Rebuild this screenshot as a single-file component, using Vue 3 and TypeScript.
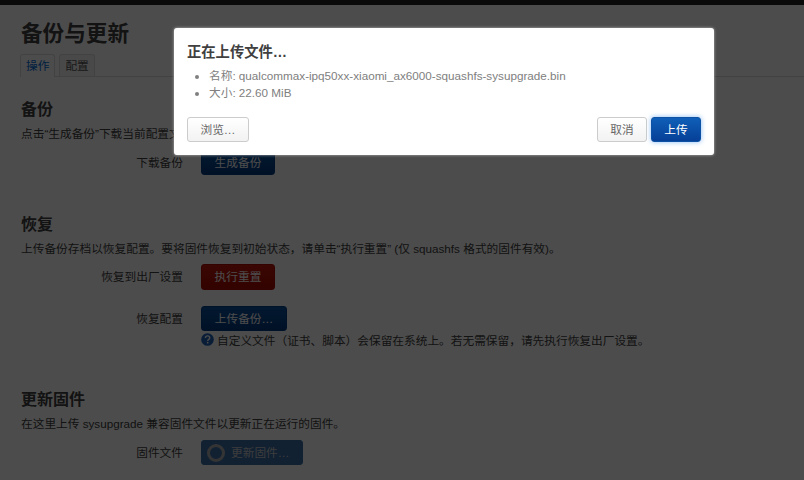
<script setup lang="ts">
const fileInfo = [
  { label: '名称', value: 'qualcommax-ipq50xx-xiaomi_ax6000-squashfs-sysupgrade.bin' },
  { label: '大小', value: '22.60 MiB' },
]
</script>

<template>
  <div class="page">
    <div class="topbar"></div>
    <main class="main">
      <h2 class="title">备份与更新</h2>
      <ul class="tabs">
        <li class="tab active">操作</li>
        <li class="tab">配置</li>
      </ul>

      <section class="sec sec-backup">
        <h3>备份</h3>
        <p>点击“生成备份”下载当前配置文件</p>
        <div class="row first">
          <label>下载备份</label>
          <button class="btn save w74">生成备份</button>
        </div>
      </section>

      <section class="sec sec-restore">
        <h3>恢复</h3>
        <p>上传备份存档以恢复配置。要将固件恢复到初始状态，请单击“执行重置” (仅 squashfs 格式的固件有效)。</p>
        <div class="row first tight">
          <label>恢复到出厂设置</label>
          <button class="btn reset w74">执行重置</button>
        </div>
        <div class="row second">
          <label>恢复配置</label>
          <div class="field">
            <button class="btn save w86">上传备份…</button>
            <div class="hint">
              <svg class="help" viewBox="0 0 14 14" width="13" height="13" aria-hidden="true">
                <circle cx="7" cy="7" r="6.8" fill="#1f62b8" />
                <path d="M4.7 5.4C4.8 4 5.8 3.1 7.1 3.1c1.4 0 2.3.9 2.3 2 0 1-.6 1.4-1.2 1.9-.6.4-1 .8-1 1.6" fill="none" stroke="#fff" stroke-width="1.5" />
                <rect x="6.4" y="9.6" width="1.6" height="1.6" fill="#fff" />
              </svg>
              <span>自定义文件（证书、脚本）会保留在系统上。若无需保留，请先执行恢复出厂设置。</span>
            </div>
          </div>
        </div>
      </section>

      <section class="sec sec-flash">
        <h3>更新固件</h3>
        <p>在这里上传 sysupgrade 兼容固件文件以更新正在运行的固件。</p>
        <div class="row first">
          <label>固件文件</label>
          <button class="btn busy">
            <span class="spinner"></span>
            <span>更新固件…</span>
          </button>
        </div>
      </section>
    </main>

    <div class="overlay"></div>
    <div class="modal">
      <h4>正在上传文件…</h4>
      <ul class="info">
        <li v-for="item in fileInfo" :key="item.label">{{ item.label }}: {{ item.value }}</li>
      </ul>
      <div class="actions">
        <button class="mbtn browse">浏览…</button>
        <span class="spacer"></span>
        <button class="mbtn cancel">取消</button>
        <button class="mbtn upload">上传</button>
      </div>
    </div>
  </div>
</template>

<style>
html, body { margin: 0; padding: 0; background: #fff; overflow: hidden; }
</style>

<style scoped>
.page {
  position: relative;
  width: 804px;
  height: 480px;
  overflow: hidden;
  background: #fff;
  color: #404040;
  font: 11.7px/18px "Liberation Sans", "Noto Sans CJK SC", sans-serif;
}
.topbar { height: 5px; background: #222; }
.main { padding: 0 21px; }
.title {
  margin: 0;
  padding-top: 15px;
  font-size: 21.6px;
  line-height: 28px;
  font-weight: 700;
}
.tabs {
  list-style: none;
  margin: 6px -21px 0 -1px;
  padding: 0;
  display: flex;
  gap: 4px;
  height: 22px;
  border-bottom: 1px solid #ddd;
}
.tab {
  height: 21px;
  padding: 0 5px;
  line-height: 22px;
  border: 1px solid #ddd;
  border-bottom: 0;
  border-radius: 3px 3px 0 0;
  background: #f4f4f4;
  color: #555;
}
.tab.active {
  height: 22px;
  background: #fff;
  color: #0069d6;
}
h3 {
  margin: 0;
  font-size: 16px;
  line-height: 24px;
  font-weight: 700;
}
p { margin: 3px 0 0; white-space: nowrap; }
.sec-backup { margin-top: 21px; }
.sec-restore { margin-top: 38px; }
.sec-flash { margin-top: 38px; }
.row { display: flex; align-items: flex-start; }
.row.first { margin-top: 7px; }
.row.tight { margin-top: 6px; }
.row.second { margin-top: 16px; }
.row label {
  width: 162px;
  flex: none;
  text-align: right;
  line-height: 25px;
  margin-right: 18px;
}
.field { display: flex; flex-direction: column; }
.btn {
  display: inline-flex;
  align-items: center;
  justify-content: center;
  height: 25px;
  padding: 0;
  border: 1px solid #033f87;
  border-radius: 3px;
  color: #fff;
  font: inherit;
  box-sizing: border-box;
}
.w74 { width: 74px; }
.w86 { width: 86px; }
.save { background: linear-gradient(#09529f, #033a80); }
.reset {
  height: 26px;
  background: linear-gradient(#c4180c, #a80a00);
  border-color: #a80b00;
}
.busy {
  width: 102px;
  justify-content: flex-start;
  padding-left: 5px;
  gap: 6px;
  background: #3a6ea8;
  border-color: #3a6ea8;
  color: #c8c8c8;
}
.spinner {
  width: 18px;
  height: 18px;
  border: 3px solid #b0b0b0;
  border-radius: 50%;
  box-sizing: border-box;
  flex: none;
}
.hint {
  display: flex;
  align-items: center;
  gap: 3px;
  height: 18px;
  margin-top: 1px;
  white-space: nowrap;
}
.help { flex: none; margin-top: -3px; }
.overlay {
  position: absolute;
  inset: 0;
  background: rgba(0, 0, 0, 0.7);
}
.modal {
  position: absolute;
  left: 174px;
  top: 28px;
  width: 540px;
  height: 127px;
  box-sizing: border-box;
  padding: 13px;
  background: #fff;
  border-radius: 3px;
  box-shadow: 0 0 3px #bbb;
  display: flex;
  flex-direction: column;
}
.modal h4 {
  margin: 0;
  color: #404040;
  font-size: 14.3px;
  line-height: 22px;
  font-weight: 700;
}
.info {
  margin: 4px 0 0;
  padding: 0 0 0 22px;
  color: #808080;
  line-height: 17px;
}
.actions {
  margin-top: auto;
  display: flex;
  gap: 4px;
}
.spacer { flex: 1; }
.mbtn {
  height: 25px;
  padding: 0;
  box-sizing: border-box;
  border: 1px solid #ccc;
  border-radius: 3px;
  background: linear-gradient(#fff, #f2f2f2);
  color: #666;
  font: inherit;
}
.browse { width: 62px; }
.cancel { width: 50px; }
.upload {
  width: 50px;
  background: linear-gradient(#0f5fb8, #063f97);
  border-color: #0d52a5;
  color: #fff;
  box-shadow: 0 0 5px rgba(70, 150, 240, 0.65);
}
</style>
